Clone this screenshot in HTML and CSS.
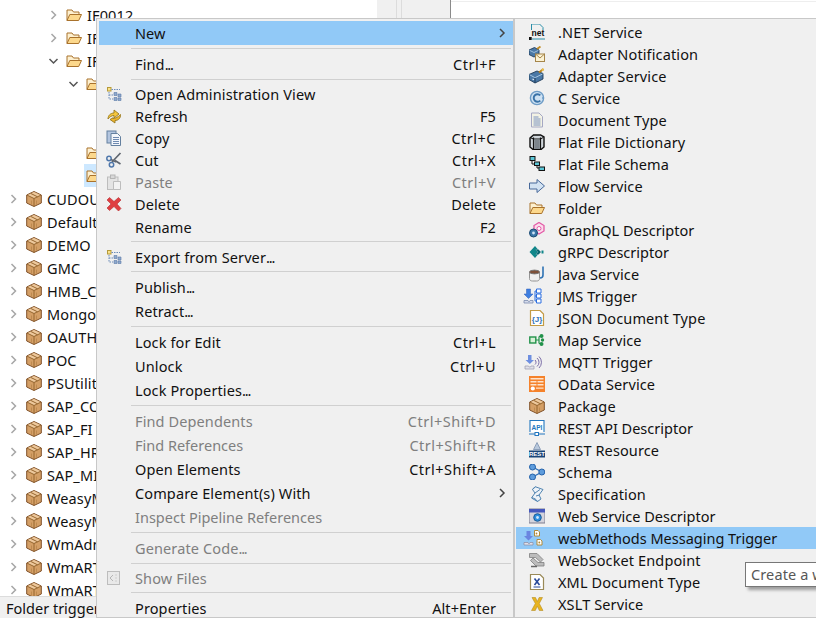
FILE: index.html
```html
<!DOCTYPE html>
<html lang="en">
<head>
<meta charset="utf-8">
<title>Designer context menu</title>
<link rel="stylesheet" href="styles.css">
</head>
<body>
<svg class="sprite" xmlns="http://www.w3.org/2000/svg">
  <symbol id="chev" viewBox="0 0 8 10"><path d="M2 1l4 4-4 4" fill="none" stroke="currentColor" stroke-width="1.5"/></symbol>
  <symbol id="chevd" viewBox="0 0 10 8"><path d="M1 2l4 4 4-4" fill="none" stroke="currentColor" stroke-width="1.5"/></symbol>
  <symbol id="folder" viewBox="0 0 16 16"><path d="M1 13.500V3h5l1.500 2h5.500v2.500" fill="#fdf0d0" stroke="#a9722c"/><path d="M1 13.500L3.800 7.500h11.700l-2.800 6z" fill="#fcd88c" stroke="#a9722c" stroke-linejoin="round"/></symbol>
  <symbol id="pkg" viewBox="0 0 16 16"><path d="M8 .5l7.300 3.500v8L8 15.500.7 12V4z" fill="#d49f66" stroke="#80522a"/><path d="M1.200 4.200L8 7.500l6.800-3.300L8 1z" fill="#edc89c"/><path d="M8 7.500v7.800M1 4.100L8 7.500l7-3.400M4.500 2.300l7 3.500" fill="none" stroke="#96662f"/><path d="M5.500 9.500v4M10.500 9.500v4" stroke="#b98549" stroke-width=".8"/></symbol>
  <symbol id="admin" viewBox="0 0 16 16"><rect x="1.500" y="1.500" width="3.500" height="3.500" fill="#fbe38a" stroke="#b59a3a"/><path d="M3 6v7h4M5.500 3.500H14M3 9h4" fill="none" stroke="#6c8cb8" stroke-dasharray="1.500 1"/><path d="M8 6.500h3v3H8zM12 8h3v3h-3zM8 11.500h3v3H8zM12 12h3v2.500h-3z" fill="#8fa9cc" stroke="#5a7aa8" stroke-width=".6"/></symbol>
  <symbol id="refresh" viewBox="0 0 16 16"><path d="M2 11C2 7.500 4.500 5 8 5V2l5 4-5 4V7.500C5.500 7.500 3.500 9 2 11z" fill="#f5c63c" stroke="#97781f" stroke-width=".9" stroke-linejoin="round"/><path d="M14.500 6.500c.3 3.500-2 6-5.500 6V15l-5-3.500L7 9.800v.7c2.500 0 5-1.500 7.500-4z" fill="#eeb52c" stroke="#97781f" stroke-width=".9" stroke-linejoin="round"/></symbol>
  <symbol id="copy" viewBox="0 0 16 16"><rect x="1" y="1" width="9" height="12" fill="#b3c5df" stroke="#64809f"/><path d="M5 3.500h6.500l3 3V15.500H5z" fill="#f3f6fb" stroke="#64809f"/><path d="M7 7.500h6M7 9.500h6M7 11.500h6M7 13.500h6" stroke="#6f8ab0"/></symbol>
  <symbol id="cut" viewBox="0 0 16 16"><path d="M14.500 1L6 10M9 8.500l5.500 3.500" stroke="#5f6670" stroke-width="1.700" fill="none"/><circle cx="3" cy="6.500" r="2.200" fill="none" stroke="#4f77ab" stroke-width="1.500"/><circle cx="5.500" cy="12.800" r="2.200" fill="none" stroke="#4f77ab" stroke-width="1.500"/><path d="M5 7.500L10 10" stroke="#5f6670" stroke-width="1.500"/></symbol>
  <symbol id="paste" viewBox="0 0 16 16"><rect x="1.500" y="3" width="10.500" height="12.500" fill="#e4e4e4" stroke="#bdbdbd"/><rect x="4.500" y="1" width="4.500" height="3.500" fill="#d8d8d8" stroke="#b5b5b5"/><path d="M7.500 7.500h7v8h-7z" fill="#f2f2f2" stroke="#bdbdbd"/></symbol>
  <symbol id="del" viewBox="0 0 16 16"><path d="M3.500 1.500L8 5.500l4.500-4 2.500 2.500-4 4 4 4.500-2.500 2.500L8 10.500l-4.500 4L1 12l4-4-4-4z" fill="#df3f42" stroke="#b52c30" stroke-width=".6"/></symbol>
  <symbol id="show" viewBox="0 0 16 16"><rect x="1.500" y="1.500" width="12" height="13" fill="#e9e9e9" stroke="#bdbdbd"/><path d="M7 5L4 8l3 3" fill="none" stroke="#b5b5b5"/><path d="M10 4.500v1M10 7.500v1M10 10.500v1" stroke="#b5b5b5"/></symbol>

  <symbol id="adnot" viewBox="0 0 16 16"><path d="M0 4l5.500-2.500L10 4v4.500L5 11 0 8.500z" fill="#4a78a6" stroke="#1f3c5a" stroke-width=".9"/><path d="M.5 4.300L5 6.500 9.500 4.300" fill="none" stroke="#a6c6e2" stroke-width=".9"/><path d="M8 3l3.500-2.500" stroke="#c08a22" stroke-width="1.800"/><rect x="6.500" y="8" width="9" height="7.500" fill="#fbf2d4" stroke="#a5854a"/><path d="M6.500 8l4.500 4 4.500-4" fill="none" stroke="#a5854a"/></symbol>
  <symbol id="adsvc" viewBox="0 0 16 16"><path d="M0 6.500L8 3l6 2.500v5.500L6 15l-6-3.500z" fill="#4a78a6" stroke="#1f3c5a" stroke-width=".9"/><path d="M.5 6.700l5.500 3 7.500-3.700" fill="none" stroke="#a6c6e2" stroke-width="1"/><path d="M6 9.800V15" stroke="#1f3c5a"/><path d="M3.500 11l1.500.8" stroke="#dbe8f4" stroke-width="1.200"/><path d="M10 4.500l4.500-3.500" stroke="#b9831e" stroke-width="2"/><circle cx="13.700" cy="1.700" r="1.200" fill="#ecc04a"/></symbol>
  <symbol id="csvc" viewBox="0 0 16 16"><circle cx="8" cy="8" r="6.600" fill="#cfe2f3" stroke="#6e9cc6" stroke-width="1.400"/><path d="M11.300 5.400A3.800 3.800 0 1 0 11.300 10.600" fill="none" stroke="#3a73a8" stroke-width="1.900"/><path d="M13 8h2" stroke="#6e9cc6" stroke-width="1.400"/></symbol>
  <symbol id="doc" viewBox="0 0 16 16"><path d="M2.500 1h7.500l3.500 3.500V15h-11z" fill="#f3f2e4" stroke="#a5a8c4"/><path d="M4.500 5h5M4.500 7h7M4.500 9h7M4.500 11h7M4.500 13h7" stroke="#7a92c0"/></symbol>
  <symbol id="ffd" viewBox="0 0 16 16"><path d="M1 4l3.500-3h7L15 3v10l-3 2.500H4L1 13z" fill="#cfd5da" stroke="#0e0e0e" stroke-width="1.400"/><path d="M4.500 3.500v11.500M11.500 3.500v11.500" stroke="#111" stroke-width="1.200"/><path d="M1.500 3.800l3 1.200h7l3-1.700" fill="none" stroke="#111"/><rect x="5.200" y="5.500" width="5.600" height="9.500" fill="#7d858c"/></symbol>
  <symbol id="ffs" viewBox="0 0 16 16"><path d="M3 4.500v3.500h3.500M8 9v3h3" fill="none" stroke="#111" stroke-width="1"/><rect x="1" y="0.500" width="5" height="4" fill="#5cc6d6" stroke="#111"/><rect x="5.500" y="6" width="5" height="3.500" fill="#5cc6d6" stroke="#111"/><rect x="10" y="11" width="5.500" height="3.500" fill="#5cc6d6" stroke="#111"/></symbol>
  <symbol id="flow" viewBox="0 0 16 16"><path d="M.500 5H8V1.500L15.500 8 8 14.500V11H.500z" fill="#d2e2f2" stroke="#47699a" stroke-linejoin="round"/></symbol>
  <symbol id="gql" viewBox="0 0 16 16"><path d="M10 .5l5 3v5.500L10 12 5 9V3.500z" fill="#fbdcec" stroke="#e35aa6" stroke-width="1.300"/><circle cx="10" cy="6.500" r="2" fill="#fff" stroke="#e35aa6"/><circle cx="4.500" cy="11" r="4" fill="#3a76a8" stroke="#1c4b72" stroke-width="1"/><circle cx="4.500" cy="11" r="1.400" fill="#cfe3f5"/></symbol>
  <symbol id="grpc" viewBox="0 0 16 16"><path d="M.5 8L6 2l3 3.500H6.500L9 8l-2.500 2.500H9L6 14z" fill="#10868a"/><path d="M6.500 5.500h3L12 8l-2.500 2.500h-3L9 8z" fill="#0b6672"/><path d="M12.500 6.500h2v3h-2z" fill="#10868a"/></symbol>
  <symbol id="java" viewBox="0 0 16 16"><path d="M.5 6h10v6.500c0 2-1.500 2.500-3 2.500h-4c-1.500 0-3-.5-3-2.500z" fill="#efefef" stroke="#929292"/><ellipse cx="5.500" cy="6" rx="5" ry="1.900" fill="#7e5038" stroke="#777"/><path d="M14 .5V9c0 2-1 3-3 3" fill="none" stroke="#2f73b4" stroke-width="1.600"/></symbol>
  <symbol id="jms" viewBox="0 0 20 16"><path d="M3.500 1h4v5h2.500L5.500 10.500 1 6h2.500z" fill="#3f7fe0" stroke="#2d5fb8" stroke-width=".5"/><path d="M1 12.500h4l.5 1h1l.5-1h3v2.500H1z" fill="#d6dcec" stroke="#7b8cae" stroke-width=".8"/><path d="M13.500 1H18v4h-4.500zM13.500 6H18v4h-4.500zM13.500 11H18v4h-4.500z" fill="#fff" stroke="#2d6fe0"/><path d="M12 3h1.500M12 3v10h1.500M12 8h1.500" stroke="#2d6fe0" fill="none"/></symbol>
  <symbol id="map" viewBox="0 0 16 16"><rect x=".8" y="5" width="6" height="6" fill="#d8f0d8" stroke="#22924a" stroke-width="1.400"/><path d="M7 8h3M10 4.500v7M10 4.500h2M10 11.500h2" fill="none" stroke="#22924a" stroke-width="1.200"/><circle cx="12.500" cy="4" r="2" fill="#22924a"/><circle cx="12.500" cy="12" r="2" fill="#22924a"/><circle cx="13.500" cy="8" r="1.700" fill="#22924a"/></symbol>
  <symbol id="mqtt" viewBox="0 0 18 16"><path d="M4 1h3.500v5H10L5.800 10 1.500 6H4z" fill="#6e8fe0"/><path d="M1 12h3.500l.7 1h1.200l.6-1H10v3H1z" fill="#e0e0ea" stroke="#9a9aae" stroke-width=".7"/><path d="M11 6a3 3 0 0 1 0 4.500M13 4a5.500 5.500 0 0 1 0 8.500M15 2.500a8 8 0 0 1 0 11.500" fill="none" stroke="#7b6ea8" stroke-width="1"/></symbol>
  <symbol id="odata" viewBox="0 0 16 16"><rect x="0" y="0" width="16" height="16" fill="#f5822b"/><path d="M1.500 2h13v1.500h-13zM1.500 5h6v1.500h-6zM8.500 5h6v1.500h-6zM1.500 8h6v1.500h-6zM8.500 8h6v1.500h-6zM7 11.500h7.500v1.200H7z" fill="#fde3cc"/><circle cx="3.800" cy="12.500" r="2.100" fill="#fff"/></symbol>
  <symbol id="schema" viewBox="0 0 16 16"><path d="M3.500 3l9.500 5-9.500 5" fill="none" stroke="#2d6fb8" stroke-width="1.300"/><circle cx="3.500" cy="3" r="3" fill="#5e9cdc" stroke="#2562aa"/><circle cx="3.500" cy="13" r="3" fill="#5e9cdc" stroke="#2562aa"/><circle cx="12.800" cy="8" r="3" fill="#5e9cdc" stroke="#2562aa"/></symbol>
  <symbol id="spec" viewBox="0 0 16 16"><path d="M6.500 .8L14 3.500 10 9l2 4-3.500 2.500L2.500 12 6 7 3.500 3.500z" fill="#eef3f8" stroke="#4f83b0" stroke-linejoin="round"/><path d="M6.500 .8C4.500 2 3.500 3 3.500 3.500M6 7l5-3.500M7 10l3.500-1M3 11.800c2 .5 4 1 5.500 3.700" fill="none" stroke="#4f83b0"/></symbol>
  <symbol id="wsd" viewBox="0 0 16 16"><rect x="0" y="1" width="16" height="14" fill="#d4d4dd" stroke="#7f7f90"/><rect x="0" y="1" width="16" height="3.500" fill="#4558bd"/><circle cx="8.500" cy="9.500" r="3.800" fill="#2b8ede" stroke="#1a5a95"/><circle cx="8.500" cy="9.500" r="1.400" fill="#cfe8fb"/></symbol>
  <symbol id="wmt" viewBox="0 0 20 16"><path d="M3.500 1h4v5H10L5.500 10.500 1 6h2.500z" fill="#6a85e0"/><path d="M1 12.500h4l.5 1h1l.5-1h3v2.500H1z" fill="#e0e0ea" stroke="#8a8aa0" stroke-width=".7"/><path d="M11.500 .5h3.500l1.500 1.500V6h-5z" fill="#fff" stroke="#b08a3a"/><path d="M14 9.500h3.500l1.500 1.500v4h-5z" fill="#fff" stroke="#b08a3a"/><circle cx="13.500" cy="3.500" r=".9" fill="#b08a3a"/><circle cx="16.300" cy="12.500" r=".9" fill="#b08a3a"/></symbol>
  <symbol id="wse" viewBox="0 0 16 16"><path d="M.5 1.500h7.500l6 6-2.500 2.500-5-4.500H.5zM15 14H7L1.500 8.500 4 6l5 4.500h6z" fill="#bcbcbc" stroke="#7f7f7f" stroke-width=".8"/><path d="M2 14.500h6" stroke="#666" stroke-width="1.500"/></symbol>
  <symbol id="xmld" viewBox="0 0 16 16"><path d="M1.500 .5H11L14.500 4v11.500h-13z" fill="#fff" stroke="#9a8a58" stroke-width="1.200"/><path d="M5.500 4.500L10.500 11M10.500 4.500L5.500 11" stroke="#27499a" stroke-width="1.600"/><path d="M4.500 13h7" stroke="#27499a"/></symbol>
  <symbol id="xslt" viewBox="0 0 16 16"><path d="M3 1.500h3.500L8.300 5.500l1.800-4H13.500L10.300 7.500l3.700 7h-3.700L8.300 10.300l-2 4.200H2.500l3.800-7z" fill="#e8b420" stroke="#ad8214" stroke-width=".5"/></symbol>
</svg>

<div class="app">
  <div class="workspace">
    <div class="tree">
      <div class="row l2"><svg class="ch col"><use href="#chev"/></svg><svg class="ti"><use href="#folder"/></svg><span>IF0012</span></div>
      <div class="row l2"><svg class="ch col"><use href="#chev"/></svg><svg class="ti"><use href="#folder"/></svg><span>IF</span></div>
      <div class="row l2"><svg class="chd"><use href="#chevd"/></svg><svg class="ti"><use href="#folder"/></svg><span>IF</span></div>
      <div class="row l3"><svg class="chd"><use href="#chevd"/></svg><svg class="ti"><use href="#folder"/></svg></div>
      <div class="row"></div>
      <div class="row"></div>
      <div class="row l3"><span class="noch"></span><svg class="ti"><use href="#folder"/></svg></div>
      <div class="row l3 sel"><span class="noch"></span><svg class="ti"><use href="#folder"/></svg></div>
      <div class="row l0"><svg class="ch col"><use href="#chev"/></svg><svg class="ti"><use href="#pkg"/></svg><span>CUDOU</span></div>
      <div class="row l0"><svg class="ch col"><use href="#chev"/></svg><svg class="ti"><use href="#pkg"/></svg><span>Default</span></div>
      <div class="row l0"><svg class="ch col"><use href="#chev"/></svg><svg class="ti"><use href="#pkg"/></svg><span>DEMO</span></div>
      <div class="row l0"><svg class="ch col"><use href="#chev"/></svg><svg class="ti"><use href="#pkg"/></svg><span>GMC</span></div>
      <div class="row l0"><svg class="ch col"><use href="#chev"/></svg><svg class="ti"><use href="#pkg"/></svg><span>HMB_C</span></div>
      <div class="row l0"><svg class="ch col"><use href="#chev"/></svg><svg class="ti"><use href="#pkg"/></svg><span>Mongo</span></div>
      <div class="row l0"><svg class="ch col"><use href="#chev"/></svg><svg class="ti"><use href="#pkg"/></svg><span>OAUTH</span></div>
      <div class="row l0"><svg class="ch col"><use href="#chev"/></svg><svg class="ti"><use href="#pkg"/></svg><span>POC</span></div>
      <div class="row l0"><svg class="ch col"><use href="#chev"/></svg><svg class="ti"><use href="#pkg"/></svg><span>PSUtilit</span></div>
      <div class="row l0"><svg class="ch col"><use href="#chev"/></svg><svg class="ti"><use href="#pkg"/></svg><span>SAP_CO</span></div>
      <div class="row l0"><svg class="ch col"><use href="#chev"/></svg><svg class="ti"><use href="#pkg"/></svg><span>SAP_FI</span></div>
      <div class="row l0"><svg class="ch col"><use href="#chev"/></svg><svg class="ti"><use href="#pkg"/></svg><span>SAP_HR</span></div>
      <div class="row l0"><svg class="ch col"><use href="#chev"/></svg><svg class="ti"><use href="#pkg"/></svg><span>SAP_MI</span></div>
      <div class="row l0"><svg class="ch col"><use href="#chev"/></svg><svg class="ti"><use href="#pkg"/></svg><span>WeasyM</span></div>
      <div class="row l0"><svg class="ch col"><use href="#chev"/></svg><svg class="ti"><use href="#pkg"/></svg><span>WeasyM</span></div>
      <div class="row l0"><svg class="ch col"><use href="#chev"/></svg><svg class="ti"><use href="#pkg"/></svg><span>WmAdm</span></div>
      <div class="row l0"><svg class="ch col"><use href="#chev"/></svg><svg class="ti"><use href="#pkg"/></svg><span>WmART</span></div>
      <div class="row l0"><svg class="ch col"><use href="#chev"/></svg><svg class="ti"><use href="#pkg"/></svg><span>WmART</span></div>
    </div>
    <div class="sash-a"></div>
    <div class="sash-b"></div>
    <div class="sash-c"></div>
    <div class="editor"></div>
  </div>
  <div class="status">Folder trigger</div>
</div>

<div class="menu main-menu">
  <div class="mi h24 active"><span class="slot"></span><span class="lbl">New</span><svg class="arrow"><use href="#chev"/></svg></div>
  <div class="sep"></div>
  <div class="mi h24"><span class="slot"></span><span class="lbl">Find<span class="dots">...</span></span><span class="key">Ctrl+F</span></div>
  <div class="sep"></div>
  <div class="mi h22"><span class="slot"><svg class="mic"><use href="#admin"/></svg></span><span class="lbl">Open Administration View</span></div>
  <div class="mi h22"><span class="slot"><svg class="mic"><use href="#refresh"/></svg></span><span class="lbl">Refresh</span><span class="key short">F5</span></div>
  <div class="mi h22"><span class="slot"><svg class="mic"><use href="#copy"/></svg></span><span class="lbl">Copy</span><span class="key">Ctrl+C</span></div>
  <div class="mi h22"><span class="slot"><svg class="mic"><use href="#cut"/></svg></span><span class="lbl">Cut</span><span class="key">Ctrl+X</span></div>
  <div class="mi h22 off"><span class="slot"><svg class="mic"><use href="#paste"/></svg></span><span class="lbl">Paste</span><span class="key">Ctrl+V</span></div>
  <div class="mi h22"><span class="slot"><svg class="mic"><use href="#del"/></svg></span><span class="lbl">Delete</span><span class="key short">Delete</span></div>
  <div class="mi h23"><span class="slot"></span><span class="lbl">Rename</span><span class="key short">F2</span></div>
  <div class="sep"></div>
  <div class="mi h23"><span class="slot"><svg class="mic"><use href="#admin"/></svg></span><span class="lbl">Export from Server<span class="dots">...</span></span></div>
  <div class="sep"></div>
  <div class="mi h24"><span class="slot"></span><span class="lbl">Publish<span class="dots">...</span></span></div>
  <div class="mi h24"><span class="slot"></span><span class="lbl">Retract<span class="dots">...</span></span></div>
  <div class="sep"></div>
  <div class="mi h24"><span class="slot"></span><span class="lbl">Lock for Edit</span><span class="key">Ctrl+L</span></div>
  <div class="mi h24"><span class="slot"></span><span class="lbl">Unlock</span><span class="key">Ctrl+U</span></div>
  <div class="mi h24"><span class="slot"></span><span class="lbl">Lock Properties<span class="dots">...</span></span></div>
  <div class="sep"></div>
  <div class="mi h24 off"><span class="slot"></span><span class="lbl">Find Dependents</span><span class="key">Ctrl+Shift+D</span></div>
  <div class="mi h24 off"><span class="slot"></span><span class="lbl tight">Find References</span><span class="key">Ctrl+Shift+R</span></div>
  <div class="mi h24"><span class="slot"></span><span class="lbl">Open Elements</span><span class="key">Ctrl+Shift+A</span></div>
  <div class="mi h24"><span class="slot"></span><span class="lbl">Compare Element(s) With</span><svg class="arrow"><use href="#chev"/></svg></div>
  <div class="mi h24 off"><span class="slot"></span><span class="lbl tight">Inspect Pipeline References</span></div>
  <div class="sep"></div>
  <div class="mi h24 off"><span class="slot"></span><span class="lbl">Generate Code<span class="dots">...</span></span></div>
  <div class="sep"></div>
  <div class="mi h22 off"><span class="slot"><svg class="mic"><use href="#show"/></svg></span><span class="lbl">Show Files</span></div>
  <div class="sep"></div>
  <div class="mi h24"><span class="slot"></span><span class="lbl">Properties</span><span class="key short">Alt+Enter</span></div>
</div>

<div class="menu sub-menu">
  <div class="si"><svg class="sic" viewBox="0 0 16 16"><path d="M2.500 6V0h8l3.500 3.500V6" fill="none" stroke="#2b8ea8"/><path d="M3 15h13" stroke="#2b8ea8"/><rect x="0" y="13" width="2.700" height="3" fill="#111"/><text x="2.500" y="12" class="svgt-net">net</text></svg><span>.NET Service</span></div>
  <div class="si"><svg class="sic"><use href="#adnot"/></svg><span>Adapter Notification</span></div>
  <div class="si"><svg class="sic"><use href="#adsvc"/></svg><span>Adapter Service</span></div>
  <div class="si"><svg class="sic"><use href="#csvc"/></svg><span>C Service</span></div>
  <div class="si"><svg class="sic"><use href="#doc"/></svg><span>Document Type</span></div>
  <div class="si"><svg class="sic"><use href="#ffd"/></svg><span>Flat File Dictionary</span></div>
  <div class="si"><svg class="sic"><use href="#ffs"/></svg><span>Flat File Schema</span></div>
  <div class="si"><svg class="sic"><use href="#flow"/></svg><span>Flow Service</span></div>
  <div class="si"><svg class="sic"><use href="#folder"/></svg><span>Folder</span></div>
  <div class="si tight"><svg class="sic"><use href="#gql"/></svg><span>GraphQL Descriptor</span></div>
  <div class="si tight"><svg class="sic"><use href="#grpc"/></svg><span>gRPC Descriptor</span></div>
  <div class="si"><svg class="sic"><use href="#java"/></svg><span>Java Service</span></div>
  <div class="si wide"><svg class="sic-w"><use href="#jms"/></svg><span>JMS Trigger</span></div>
  <div class="si"><svg class="sic" viewBox="0 0 16 16"><path d="M1.500 .5H11L14.500 4v11.500h-13z" fill="#fff" stroke="#c39b45" stroke-width="1.200"/><text x="8" y="11.500" class="svgt-json">{J}</text></svg><span>JSON Document Type</span></div>
  <div class="si"><svg class="sic"><use href="#map"/></svg><span>Map Service</span></div>
  <div class="si wide"><svg class="sic-w"><use href="#mqtt"/></svg><span>MQTT Trigger</span></div>
  <div class="si"><svg class="sic"><use href="#odata"/></svg><span>OData Service</span></div>
  <div class="si"><svg class="sic"><use href="#pkg"/></svg><span>Package</span></div>
  <div class="si tight"><svg class="sic" viewBox="0 0 16 16"><path d="M1 12V.5h14V12" fill="#fff" stroke="#2277c0" stroke-width="1.100"/><text x="8" y="9.800" class="svgt-api">API</text><path d="M0 14h16" stroke="#2277c0"/><rect x="6" y="12.500" width="3.500" height="3" fill="#fff" stroke="#2277c0"/></svg><span>REST API Descriptor</span></div>
  <div class="si"><svg class="sic" viewBox="0 0 16 16"><path d="M8 .5l3.500 7h-7z" fill="#b8c8dc" stroke="#7b90ae" stroke-width=".8"/><rect x="0" y="8.500" width="16" height="7" fill="#1a4478"/><text x="8" y="14.200" class="svgt-rest">REST</text></svg><span>REST Resource</span></div>
  <div class="si"><svg class="sic"><use href="#schema"/></svg><span>Schema</span></div>
  <div class="si"><svg class="sic"><use href="#spec"/></svg><span>Specification</span></div>
  <div class="si tight"><svg class="sic"><use href="#wsd"/></svg><span>Web Service Descriptor</span></div>
  <div class="si wide active"><svg class="sic-w"><use href="#wmt"/></svg><span>webMethods Messaging Trigger</span></div>
  <div class="si"><svg class="sic"><use href="#wse"/></svg><span>WebSocket Endpoint</span></div>
  <div class="si"><svg class="sic"><use href="#xmld"/></svg><span>XML Document Type</span></div>
  <div class="si"><svg class="sic"><use href="#xslt"/></svg><span>XSLT Service</span></div>
</div>

<div class="tooltip">Create a w</div>
</body>
</html>
```
FILE: styles.css
```css
* { box-sizing: border-box; }
html, body {
  margin: 0;
  width: 816px;
  height: 618px;
  overflow: hidden;
  background: #fff;
}
body {
  position: relative;
  font-family: "Noto Sans", "Open Sans", sans-serif;
  font-size: 14.5px;
  letter-spacing: .12px;
  color: #111;
}
.sprite { position: absolute; width: 0; height: 0; }

.app { display: flex; flex-direction: column; height: 618px; }
.workspace { flex: 1; display: flex; min-height: 0; }
.tree { width: 377px; padding-top: 3px; overflow: hidden; background: #fff; }
.row { height: 23px; display: flex; align-items: center; white-space: nowrap; }
.l0 { padding-left: 6px; }
.l2 { padding-left: 46px; }
.l3 { padding-left: 66px; }
.sel { background: linear-gradient(to right, transparent 84px, #cde8ff 84px); }
.ch, .chd, .noch { width: 15px; flex: none; }
.ch { height: 10px; color: #a6a6a6; }
.chd { height: 8px; color: #555; }
.ti { width: 16px; height: 16px; flex: none; margin: 0 5px; }

.sash-a { width: 20px; background: #f0f0f0; border-right: 1px solid #dcdcdc; }
.sash-b { width: 5px; background: #f0f0f0; border-right: 1px solid #dcdcdc; }
.sash-c { width: 49px; background: #f0f0f0; border-right: 1px solid #8a8a8a; }
.editor { flex: 1; background: #fff; box-shadow: inset 0 1px 0 #fff, inset 0 2px 0 #eee; }

.status {
  height: 22px;
  flex: none;
  background: #f0f0f0;
  border-top: 1px solid #dcdcdc;
  padding-left: 6px;
  line-height: 23px;
  letter-spacing: 0;
  white-space: nowrap;
}

.menu {
  position: absolute;
  top: 18px;
  background: #f0f0f0;
  border: 1px solid #c8c8c8;
}
.main-menu { left: 96px; width: 418px; height: 600px; padding: 2px 0 0 2px; overflow: hidden; }
.sub-menu { left: 514px; width: 302px; height: 600px; padding: 2px 0 2px 1px; border-right: 0; }

.mi { display: flex; align-items: center; white-space: nowrap; }
.h22 { height: 22px; }
.h23 { height: 23px; }
.h24 { height: 24px; flex: none; }
.slot { width: 36px; flex: none; display: flex; align-items: center; padding-left: 7px; }
.mic { width: 16px; height: 16px; }
.lbl { flex: 1; }
.dots { letter-spacing: -1.200px; }
.tight { letter-spacing: 0; }
.key { margin-right: 17px; letter-spacing: .5px; }
.key.short { letter-spacing: .1px; }
.arrow { width: 8px; height: 10px; margin-right: 7px; color: #444; }
.off { color: #7f7f7f; }
.active { background: #91c9f7; letter-spacing: 0; }
.sep { height: 7px; padding: 3px 2px 3px 32px; }
.sep::before { content: ""; display: block; height: 1px; background: #d0d0d0; }

.si { height: 22px; display: flex; align-items: center; white-space: nowrap; padding-left: 13px; }
.sic { width: 16px; height: 16px; flex: none; margin-right: 13px; }
.si.wide { padding-left: 7px; }
.sic-w { width: 20px; height: 16px; flex: none; margin-right: 15px; }

.svgt-net { font: bold 8.500px "Liberation Sans", sans-serif; letter-spacing: 0; fill: #111; }
.svgt-json { font: bold 8px "Liberation Sans", sans-serif; letter-spacing: 0; fill: #2b6fb8; text-anchor: middle; }
.svgt-api { font: bold 6.500px "Liberation Sans", sans-serif; letter-spacing: 0; fill: #2277c0; text-anchor: middle; }
.svgt-rest { font: bold 6px "Liberation Sans", sans-serif; letter-spacing: 0; fill: #fff; text-anchor: middle; }

.tooltip {
  position: absolute;
  left: 745px;
  top: 562px;
  width: 71px;
  height: 25px;
  background: #fff;
  border: 1px solid #777;
  border-right: 0;
  box-shadow: 3px 3px 3px rgba(0, 0, 0, .35);
  padding-left: 5px;
  line-height: 23px;
  color: #575757;
  white-space: nowrap;
  overflow: hidden;
}
```
